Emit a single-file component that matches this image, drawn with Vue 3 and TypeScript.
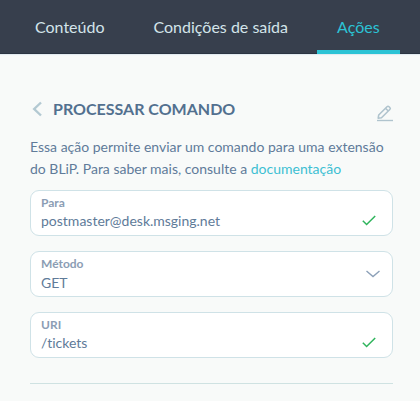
<script setup lang="ts">
import { ref } from 'vue'

const tabs: string[] = ['Conteúdo', 'Condições de saída', 'Ações']
const activeTab = ref<string>('Ações')
const to = ref<string>('postmaster@desk.msging.net')
const method = ref<string>('GET')
const uri = ref<string>('/tickets')
</script>

<template>
  <div class="panel">
    <nav class="tabs">
      <button
        v-for="tab in tabs"
        :key="tab"
        type="button"
        class="tab"
        :class="{ active: tab === activeTab }"
        @click="activeTab = tab"
      >{{ tab }}</button>
    </nav>

    <main class="content">
      <header class="heading">
        <button type="button" class="icon-button" aria-label="Voltar">
          <svg width="10" height="16" viewBox="0 0 10 16" fill="none">
            <path d="M9 1.500 2.200 8 9 14.500" stroke="#b3c9d2" stroke-width="2.400" />
          </svg>
        </button>
        <h1>PROCESSAR COMANDO</h1>
        <button type="button" class="icon-button edit" aria-label="Editar">
          <svg width="16" height="17" viewBox="0 0 16 17" fill="none" stroke="#b0c4ce">
            <path d="M1.200 13.200 1.700 10 10 1.700q1-1 2 0l.8.8q1 1 0 2L4.500 12.700zM8.500 3.200l2.800 2.800" stroke-width="1.600" stroke-linejoin="round" />
            <path d="M0 15.500h16" stroke-width="1.400" />
          </svg>
        </button>
      </header>

      <p class="description">
        Essa ação permite enviar um comando para uma extensão do BLiP. Para saber mais, consulte a
        <a href="#documentacao">documentação</a>
      </p>

      <form class="fields" @submit.prevent>
        <div class="field">
          <label for="to">Para</label>
          <div class="row">
            <input id="to" v-model="to" type="text" />
            <svg class="check" width="14" height="11" viewBox="0 0 14 11" fill="none">
              <path d="M.8 5.800 4.600 9.500 13.200 1" stroke="#2fb45c" stroke-width="1.500" />
            </svg>
          </div>
        </div>
        <div class="field select-field">
          <label for="method">Método</label>
          <div class="row">
            <select id="method" v-model="method">
              <option>GET</option>
              <option>SET</option>
              <option>DELETE</option>
            </select>
          </div>
          <svg class="chevron" width="14" height="8" viewBox="0 0 14 8" fill="none">
            <path d="M.5 1 7 6.500 13.500 1" stroke="#8ca0b8" stroke-width="1.400" />
          </svg>
        </div>
        <div class="field">
          <label for="uri">URI</label>
          <div class="row">
            <input id="uri" v-model="uri" type="text" />
            <svg class="check" width="14" height="11" viewBox="0 0 14 11" fill="none">
              <path d="M.8 5.800 4.600 9.500 13.200 1" stroke="#2fb45c" stroke-width="1.500" />
            </svg>
          </div>
        </div>
      </form>
      <hr />
    </main>
  </div>
</template>

<style>
body {
  background: #f8faf9;
}
</style>

<style scoped>
.panel {
  font-family: Lato, "Open Sans", sans-serif;
  font-variant-ligatures: none;
  color: #607b99;
}
.panel *,
.panel {
  box-sizing: border-box;
}
button,
input,
select {
  font: inherit;
  font-variant-ligatures: none;
  color: inherit;
  border: 0;
  padding: 0;
  margin: 0;
  background: none;
}
.tabs {
  display: flex;
  gap: 9px;
  height: 54px;
  padding: 0 15px;
  background: #373f4d;
  box-shadow: inset 0 -1px #2b3442, 0 1px 1px #e3ebf0;
}
.tab {
  height: 54px;
  padding: 2px 20px 0;
  border-bottom: 4px solid transparent;
  color: #d3e4ea;
  font-size: 16px;
  white-space: nowrap;
}
.tab.active {
  color: #2cc3d5;
  border-color: #2cc3d5;
}
.content {
  padding: 44px 27px 0 30px;
}
.heading {
  display: flex;
  align-items: center;
  gap: 11px;
  height: 22px;
  padding-left: 2px;
}
.icon-button {
  display: flex;
}
.edit {
  margin-left: auto;
  padding-top: 8px;
}
h1 {
  margin: 0;
  font-size: 16px;
  line-height: 22px;
  font-weight: 700;
  color: #52708f;
}
.description {
  margin: 16px 0 10px;
  font-size: 14px;
  line-height: 22px;
}
a {
  color: #3dbfd3;
  text-decoration: none;
}
.fields {
  display: grid;
  gap: 15px;
}
.field {
  position: relative;
  height: 46px;
  padding: 4px 10px 0;
  background: #fff;
  border: 1px solid #cfe2e7;
  border-radius: 9px;
}
label {
  display: block;
  font-size: 12px;
  line-height: 16px;
  font-weight: 700;
  color: #8b9db4;
}
.row {
  display: flex;
  align-items: center;
  height: 19px;
  font-size: 14px;
}
.select-field .row {
  height: 20px;
}
input,
select {
  flex: 1;
  min-width: 0;
  height: 20px;
  outline: 0;
  appearance: none;
}
.check {
  margin-right: 6px;
}
.chevron {
  position: absolute;
  top: 18px;
  right: 12px;
  pointer-events: none;
}
hr {
  margin: 25px 0 0;
  border: 0;
  border-top: 1px solid #cfe2e2;
}
</style>
